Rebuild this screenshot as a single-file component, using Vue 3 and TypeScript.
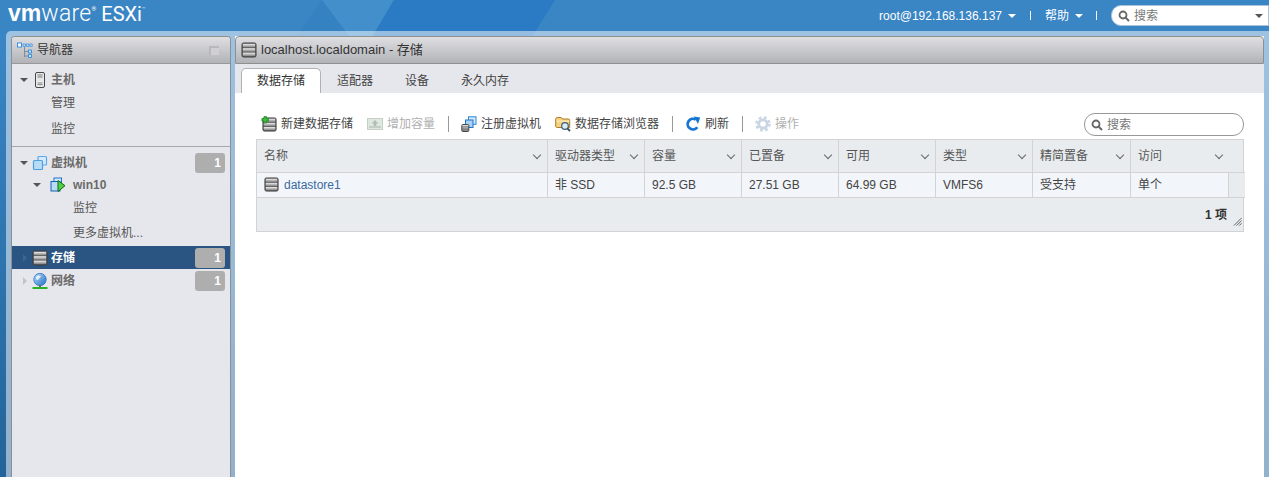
<script setup lang="ts">
interface Column {
  title: string
  value: string
}

interface ToolItem {
  icon: string
  label: string
  disabled?: boolean
  sepAfter?: boolean
}

const tabs = ['数据存储', '适配器', '设备', '永久内存']

const tools: ToolItem[] = [
  { icon: 'i-new-ds', label: '新建数据存储' },
  { icon: 'i-grow', label: '增加容量', disabled: true, sepAfter: true },
  { icon: 'i-register', label: '注册虚拟机' },
  { icon: 'i-browse', label: '数据存储浏览器', sepAfter: true },
  { icon: 'i-refresh', label: '刷新', sepAfter: true },
  { icon: 'i-gear', label: '操作', disabled: true },
]

const columns: Column[] = [
  { title: '驱动器类型', value: '非 SSD' },
  { title: '容量', value: '92.5 GB' },
  { title: '已置备', value: '27.51 GB' },
  { title: '可用', value: '64.99 GB' },
  { title: '类型', value: 'VMFS6' },
  { title: '精简置备', value: '受支持' },
]
</script>

<template>
  <div class="page">
    <!-- 隐藏的图标定义 -->
    <svg class="defs" aria-hidden="true">
      <defs>
        <linearGradient id="band" x1="0" y1="0" x2="0" y2="1">
          <stop offset="0" stop-color="#f2f2f2" />
          <stop offset="1" stop-color="#7d7d7d" />
        </linearGradient>
        <linearGradient id="globe" x1="0" y1="0" x2="1" y2="1">
          <stop offset="0" stop-color="#bcdcf6" />
          <stop offset="1" stop-color="#1f6fc4" />
        </linearGradient>
        <symbol id="i-ds" viewBox="0 0 16 16">
          <rect x="1" y="1" width="14" height="14" rx="1.5" fill="#555" stroke="#3c3c3c" />
          <rect x="1.8" y="1.8" width="12.4" height="3.6" fill="url(#band)" />
          <rect x="1.8" y="6.2" width="12.4" height="3.6" fill="url(#band)" />
          <rect x="1.8" y="10.6" width="12.4" height="3.6" fill="url(#band)" />
        </symbol>
        <symbol id="i-new-ds" viewBox="0 0 16 16">
          <use href="#i-ds" x="1" y="1" width="15" height="15" />
          <path d="M3 0.5h2.4v2.1h2.1v2.4H5.4v2.1H3V5H0.9V2.6H3z" fill="#38c13a" stroke="#1d7f20" stroke-width="0.7" />
        </symbol>
        <symbol id="i-grow" viewBox="0 0 16 16">
          <rect x="0.5" y="2.5" width="15" height="11" fill="#dfe8e0" stroke="#c6cfc8" />
          <rect x="2" y="10" width="12" height="2" fill="#c3ccc5" />
          <path d="M8 4l3.4 3.4H9.3V10H6.7V7.4H4.6z" fill="#b3bdb5" />
        </symbol>
        <symbol id="i-vms" viewBox="0 0 16 16">
          <rect x="6" y="1.5" width="8.5" height="8.5" rx="1" fill="#d5e9fa" stroke="#5aa9e8" stroke-width="1.2" />
          <rect x="1.5" y="5.5" width="9" height="9" rx="1" fill="#b9dbf6" stroke="#4d9fe3" stroke-width="1.2" />
        </symbol>
        <symbol id="i-vm-on" viewBox="0 0 16 16">
          <rect x="4" y="1" width="7.5" height="7.5" fill="#d5e9fa" stroke="#1f74c9" />
          <rect x="1" y="4.5" width="9" height="9.5" fill="#b9dbf6" stroke="#1460b3" />
          <path d="M8 3.5l7 5.2-7 5.8z" fill="#52cf44" stroke="#0d6b12" />
        </symbol>
        <symbol id="i-host" viewBox="0 0 16 16">
          <rect x="3.5" y="0.5" width="9" height="15" rx="1.5" fill="#e8e8e8" stroke="#474747" />
          <path d="M5.5 3h5M5.5 5h5" stroke="#777" />
          <path d="M5.5 11h5M5.5 12.6h5" stroke="#8b8b8b" />
        </symbol>
        <symbol id="i-net" viewBox="0 0 16 16">
          <circle cx="8" cy="6.5" r="6.2" fill="url(#globe)" stroke="#2a74c2" stroke-width="0.8" />
          <path d="M4 4c1.6-1.8 3.6-1.8 4.6-1 .7 1-1 1.4-1.4 2.6-.5 1.3-2 1.6-3 .9z" fill="#dff0fb" />
          <path d="M7 12.5h2v1.5H7z" fill="#666" />
          <rect x="0.5" y="14" width="15" height="2" fill="#29b324" />
        </symbol>
        <symbol id="i-register" viewBox="0 0 16 16">
          <rect x="7.5" y="0.8" width="7.5" height="7.5" fill="#d5e9fa" stroke="#2d86d6" />
          <rect x="4.5" y="4" width="7.5" height="7.5" fill="#a8d2f3" stroke="#1f74c9" />
          <rect x="0.8" y="8.5" width="7" height="7" rx="1" fill="url(#band)" stroke="#444" />
          <path d="M1 10.8h6.6M1 13.1h6.6" stroke="#555" stroke-width="0.7" />
        </symbol>
        <symbol id="i-browse" viewBox="0 0 16 16">
          <path d="M0.7 3.2c0-1 .6-1.7 1.5-1.7h4l1.3 1.5h5.8c.9 0 1.4.5 1.4 1.3v7.2H2.2c-.9 0-1.5-.6-1.5-1.5z" fill="#f5d27f" stroke="#a97a24" />
          <path d="M1.5 5.2h12.8" stroke="#fdf0c8" />
          <circle cx="10" cy="10" r="3.3" fill="#d8ecfa" stroke="#3d5f7e" stroke-width="1.2" />
          <path d="M12.4 12.4L15 15" stroke="#39485a" stroke-width="1.8" />
        </symbol>
        <symbol id="i-refresh" viewBox="0 0 16 16">
          <path d="M12.3 11.2A5.3 5.3 0 1 1 10.8 3.6" fill="none" stroke="#1576d2" stroke-width="2.8" />
          <path d="M8.8 0.4L15.2 1.6 13 8z" fill="#1576d2" />
        </symbol>
        <symbol id="i-gear" viewBox="0 0 16 16">
          <circle cx="8" cy="8" r="6.3" fill="none" stroke="#cad6e4" stroke-width="3" stroke-dasharray="2.6 2.35" />
          <circle cx="8" cy="8" r="4.2" fill="none" stroke="#cad6e4" stroke-width="2.8" />
        </symbol>
        <symbol id="i-search" viewBox="0 0 12 12">
          <circle cx="5" cy="5" r="3.5" fill="none" stroke="#666" stroke-width="1.8" />
          <path d="M7.6 7.6L11 11" stroke="#666" stroke-width="2" />
        </symbol>
      </defs>
    </svg>

    <!-- 顶部的斜切色块 -->
    <svg class="banner-art" viewBox="0 0 1269 37" aria-hidden="true">
      <polygon points="322,0 350,37 296,37" fill="#3582c3" />
      <polygon points="322,0 394,0 372,37 350,37" fill="#428fcc" />
      <polygon points="394,0 555,0 532,37 372,37" fill="#2a7ac4" />
    </svg>

    <header class="banner">
      <div class="logo">
        <span class="logo-vm">vm</span><span class="logo-ware">ware</span><span class="logo-r">®</span>
        <span class="logo-esxi">ESXi</span><span class="logo-tm">™</span>
      </div>
      <div class="banner-right">
        <span class="banner-link">root@192.168.136.137<i class="caret-white"></i></span>
        <span class="banner-sep"></span>
        <span class="banner-link">帮助<i class="caret-white"></i></span>
        <span class="banner-sep last"></span>
        <div class="top-search">
          <svg class="search-icon"><use href="#i-search" /></svg>
          <span>搜索</span>
          <i class="caret-dark"></i>
        </div>
      </div>
    </header>

    <main class="workspace">
      <aside class="nav-panel">
        <div class="panel-head">
          <svg class="nav-logo" viewBox="0 0 17 16">
            <path d="M7.5 5v10M7.5 9.5h4M7.5 14h4" fill="none" stroke="#7d8ca0" />
            <rect x="0.5" y="1" width="4" height="4" fill="#fff" stroke="#3b8fdc" />
            <path d="M6 2h2.4v2.4H6zM9.4 2h2.4v2.4H9.4zM12.8 2h2.4v2.4h-2.4z" fill="#cfe5f7" stroke="#3b8fdc" stroke-width="0.8" />
            <path d="M11.5 8h3v3h-3zM11.5 12.5h3v3h-3z" fill="#cfe5f7" stroke="#3b8fdc" />
          </svg>
          <span class="nav-title">导航器</span>
          <span class="pin-btn"><i></i></span>
        </div>

        <div class="tree">
          <section class="tree-group first">
            <div class="row top">
              <i class="caret-down"></i>
              <svg class="tree-icon"><use href="#i-host" /></svg>
              <span class="label">主机</span>
            </div>
            <div class="row sub">管理</div>
            <div class="row sub">监控</div>
          </section>

          <section class="tree-group">
            <div class="row top">
              <i class="caret-down"></i>
              <svg class="tree-icon"><use href="#i-vms" /></svg>
              <span class="label">虚拟机</span>
              <span class="badge">1</span>
            </div>
            <div class="row vm">
              <i class="caret-down"></i>
              <svg class="tree-icon"><use href="#i-vm-on" /></svg>
              <span class="label">win10</span>
            </div>
            <div class="row sub deep r24">监控</div>
            <div class="row sub deep r26">更多虚拟机...</div>
            <div class="row top selected">
              <i class="caret-right"></i>
              <svg class="tree-icon"><use href="#i-ds" /></svg>
              <span class="label">存储</span>
              <span class="badge">1</span>
            </div>
            <div class="row top net">
              <i class="caret-right"></i>
              <svg class="tree-icon"><use href="#i-net" /></svg>
              <span class="label">网络</span>
              <span class="badge">1</span>
            </div>
          </section>
        </div>
      </aside>

      <section class="content-panel">
        <div class="panel-head bordered">
          <svg class="head-icon"><use href="#i-ds" /></svg>
          <span class="content-title">localhost.localdomain - 存储</span>
        </div>

        <nav class="tabs">
          <span v-for="(tab, i) in tabs" :key="tab" class="tab" :class="{ active: i === 0 }">{{ tab }}</span>
        </nav>

        <div class="body">
          <div class="toolbar">
            <template v-for="tool in tools" :key="tool.label">
              <span class="tool" :class="{ disabled: tool.disabled }">
                <svg class="tool-icon"><use :href="'#' + tool.icon" /></svg>
                {{ tool.label }}
              </span>
              <span v-if="tool.sepAfter" class="tool-sep"></span>
            </template>
            <div class="grid-search">
              <svg class="search-icon"><use href="#i-search" /></svg>
              <span>搜索</span>
            </div>
          </div>

          <div class="grid">
            <div class="cell head">名称<i class="chevron"></i></div>
            <div v-for="col in columns" :key="col.title" class="cell head">{{ col.title }}<i class="chevron"></i></div>
            <div class="cell head span2">访问<i class="chevron"></i></div>

            <div class="cell data">
              <svg class="ds-small"><use href="#i-ds" /></svg>
              <a class="ds-link">datastore1</a>
            </div>
            <div v-for="col in columns" :key="col.value" class="cell data">{{ col.value }}</div>
            <div class="cell data">单个</div>
            <div class="cell data filler"></div>

            <div class="grid-foot">
              <b>1 项</b>
              <svg class="grip" viewBox="0 0 10 10">
                <path d="M9.5 1L1 9.5M9.5 4L4 9.5M9.5 7L7 9.5" stroke="#555" stroke-width="1" />
              </svg>
            </div>
          </div>
        </div>
      </section>
    </main>
  </div>
</template>

<style>
html,
body {
  margin: 0;
  overflow: hidden;
}
</style>

<style scoped>
.page {
  position: relative;
  display: flex;
  flex-direction: column;
  width: 1269px;
  height: 477px;
  overflow: hidden;
  font-family: "Liberation Sans", "Noto Sans CJK SC", sans-serif;
  font-size: 12px;
  line-height: 16px;
  color: #565656;
  background: linear-gradient(#3a85c4 0, #3a85c4 40px, #236399 100%);
}

.defs {
  position: absolute;
  width: 0;
  height: 0;
}

.banner-art {
  position: absolute;
  left: 0;
  top: 0;
  width: 1269px;
  height: 37px;
}

.banner {
  position: relative;
  z-index: 1;
  display: flex;
  justify-content: space-between;
  align-items: center;
  height: 31px;
  flex: none;
  color: #fff;
}

.logo {
  align-self: flex-start;
  display: flex;
  align-items: baseline;
  padding: 2px 0 0 8px;
  font-family: Roboto, sans-serif;
  line-height: 23px;
  white-space: pre;
}

.logo-vm {
  font-family: "Liberation Sans", sans-serif;
  font-size: 23px;
  font-weight: 700;
}

.logo-ware {
  font-size: 23px;
  font-weight: 300;
  letter-spacing: 0.3px;
}

.logo-r {
  align-self: flex-start;
  margin: 3px 5px 0 0;
  font-size: 6px;
  line-height: 8px;
}

.logo-esxi {
  font-size: 20px;
}

.logo-tm {
  align-self: flex-start;
  margin-top: 3px;
  font-size: 6px;
  line-height: 8px;
  opacity: 0.7;
}

.banner-right {
  display: flex;
  align-items: center;
}

.banner-link {
  display: flex;
  align-items: center;
}

.caret-white {
  width: 0;
  height: 0;
  margin-left: 6px;
  border-left: 4px solid transparent;
  border-right: 4px solid transparent;
  border-top: 4px solid #fff;
}

.banner-sep {
  width: 1px;
  height: 9px;
  margin: 0 14px;
  background: #fff;
}

.banner-sep.last {
  margin-left: 13px;
}

.top-search {
  display: flex;
  align-items: center;
  width: 158px;
  height: 21px;
  box-sizing: border-box;
  padding-left: 6px;
  background: #fff;
  border: 1px solid #a9c5de;
  border-radius: 10px 0 0 10px;
  color: #777;
}

.search-icon {
  flex: none;
  width: 12px;
  height: 12px;
  margin-right: 4px;
}

.caret-dark {
  width: 0;
  height: 0;
  margin-left: auto;
  margin-right: 5px;
  border-left: 4px solid transparent;
  border-right: 4px solid transparent;
  border-top: 4px solid #555;
}

.workspace {
  position: relative;
  z-index: 1;
  flex: 1;
  min-height: 0;
  display: flex;
  gap: 4px;
  margin-left: 6px;
  padding: 5px 5px 0;
  background: rgba(255, 255, 255, 0.5);
  border-radius: 5px 0 0 0;
}

.nav-panel {
  flex: none;
  width: 220px;
  box-sizing: border-box;
  border: 1px solid #8f8f8f;
  border-bottom: none;
  border-radius: 4px 4px 0 0;
  background: #e6e7ec;
}

.panel-head {
  display: flex;
  align-items: center;
  height: 27px;
  box-sizing: border-box;
  background: linear-gradient(#dfdfe2, #b2b3b7);
  border-bottom: 1px solid #999;
  color: #333;
}

.nav-panel .panel-head {
  border-radius: 3px 3px 0 0;
}

.panel-head.bordered {
  height: 28px;
  border: 1px solid #8f8f8f;
  border-radius: 4px 4px 0 0;
}

.nav-logo {
  width: 17px;
  height: 16px;
  margin-left: 5px;
}

.nav-title {
  margin-left: 3px;
}

.pin-btn {
  display: flex;
  justify-content: flex-end;
  width: 10px;
  height: 9px;
  margin-left: auto;
  margin-right: 11px;
  background: #b9b9bc;
}

.pin-btn i {
  width: 8px;
  height: 7px;
  margin-top: 2px;
  background: #d0d0d3;
}

.tree-group {
  border-top: 1px solid #a8a8aa;
  padding-top: 5px;
}

.tree-group.first {
  border-top: none;
  padding-top: 5px;
  padding-bottom: 4px;
}

.row {
  display: flex;
  align-items: center;
  height: 22px;
  box-sizing: border-box;
}

.row.top {
  padding-left: 8px;
}

.label {
  color: #6a6a6a;
  font-weight: 700;
}

.first .row.top {
  height: 21px;
}

.row.sub {
  height: 26px;
  padding-left: 39px;
}

.row.sub.deep {
  padding-left: 61px;
}

.row.sub.r24 {
  height: 24px;
}

.row.sub.r26 {
  height: 26px;
}

.row.vm {
  padding-left: 21px;
}

.row.vm .tree-icon {
  margin-left: 9px;
  margin-right: 7px;
}

.row.top.selected {
  height: 23px;
  background: #2a5583;
}

.row.selected .label {
  color: #fff;
}

.row.top.net {
  height: 24px;
}

.tree-icon {
  flex: none;
  width: 16px;
  height: 16px;
  margin-left: 4px;
  margin-right: 3px;
}

.caret-down {
  flex: none;
  width: 0;
  height: 0;
  border-left: 4px solid transparent;
  border-right: 4px solid transparent;
  border-top: 4px solid #555;
}

.caret-right {
  flex: none;
  width: 0;
  height: 0;
  margin-left: 3px;
  margin-right: 1px;
  border-top: 4px solid transparent;
  border-bottom: 4px solid transparent;
  border-left: 4px solid #c4c4c8;
}

.row.selected .caret-right {
  border-left-color: #3d6592;
}

.badge {
  width: 30px;
  height: 20px;
  margin-left: auto;
  margin-right: 5px;
  box-sizing: border-box;
  padding-right: 4px;
  background: #aeaeae;
  border-radius: 3px;
  color: #fff;
  font-weight: 700;
  line-height: 20px;
  text-align: right;
}

.content-panel {
  flex: 1;
  min-width: 0;
  display: flex;
  flex-direction: column;
  background: #fff;
}

.head-icon {
  width: 16px;
  height: 16px;
  margin-left: 5px;
  margin-right: 4px;
}

.content-title {
  color: #333;
  font-size: 13px;
}

.tabs {
  display: flex;
  align-items: flex-end;
  height: 29px;
  padding-left: 6px;
  background: #e6e7ec;
}

.tab {
  padding: 1px 16px 0;
  line-height: 24px;
  color: #444;
}

.tab.active {
  box-sizing: border-box;
  padding: 0 15px;
  background: #fff;
  border: 1px solid #b1b1b5;
  border-bottom: none;
  border-radius: 5px 5px 0 0;
  color: #333;
}

.body {
  padding: 20px 20px 0 21px;
}

.toolbar {
  display: flex;
  align-items: center;
  height: 23px;
  margin-bottom: 3px;
  color: #444;
}

.tool {
  display: flex;
  align-items: center;
  gap: 4px;
  margin-right: 14px;
  margin-bottom: 2px;
}

.toolbar > .tool:first-child {
  margin-left: 5px;
}

.tool.disabled {
  color: #b0b0b0;
}

.tool-icon {
  flex: none;
  width: 16px;
  height: 16px;
}

.tool-sep {
  flex: none;
  width: 1px;
  height: 16px;
  margin: 0 12px 2px -1px;
  background: #999;
}

.grid-search {
  display: flex;
  align-items: center;
  width: 160px;
  height: 23px;
  box-sizing: border-box;
  margin-left: auto;
  padding-left: 6px;
  border: 1px solid #999;
  border-radius: 11px;
  color: #777;
}

.grid {
  display: grid;
  grid-template-columns: 291px repeat(5, 97px) 98px 98px 16px;
  grid-template-rows: 33px 25px 33px;
  width: 988px;
  box-sizing: border-box;
  background: #e9ecef;
  border: 1px solid #d3d3d3;
}

.cell {
  display: flex;
  align-items: center;
  box-sizing: border-box;
  padding-left: 7px;
  border-right: 1px solid #d3d3d3;
  border-bottom: 1px solid #d3d3d3;
}

.cell.head {
  position: relative;
  padding-bottom: 1px;
}

.cell.span2 {
  grid-column: span 2;
  border-right: none;
}

.chevron {
  position: absolute;
  right: 7px;
  top: 12px;
  width: 5px;
  height: 5px;
  border-right: 1px solid #666;
  border-bottom: 1px solid #666;
  transform: rotate(45deg);
}

.cell.span2 .chevron {
  right: 23px;
}

.cell.data {
  padding-bottom: 1px;
  background: #f2f6fb;
  color: #444;
}

.cell.filler {
  background: #e9ecef;
  border-right: none;
}

.ds-small {
  width: 15px;
  height: 15px;
  margin-right: 5px;
}

.ds-link {
  color: #3a6a9e;
}

.grid-foot {
  grid-column: 1 / -1;
  display: flex;
  align-items: center;
  justify-content: flex-end;
  padding-right: 3px;
  color: #333;
}

.grip {
  width: 9px;
  height: 9px;
  margin-left: 6px;
  margin-top: 14px;
}
</style>
